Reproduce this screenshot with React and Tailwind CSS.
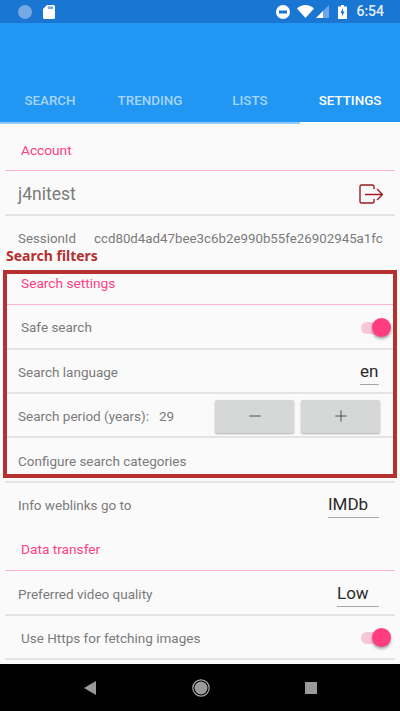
import { Minus, Plus } from "lucide-react";

function Heading({ children, className = "h-[45px]" }) {
  return (
    <div className={`mx-[5px] flex items-center border-b border-[#ffb3cf] pl-4 text-[13.7px] text-[#ff4081] ${className}`}>
      {children}
    </div>
  );
}

function Row({ children, className = "h-[44px] pt-[2px]" }) {
  return (
    <div className={`mx-[5px] flex items-center justify-between border-b-2 border-[#e4e4e4] text-[13.5px] text-[#7b7b7b] ${className}`}>
      {children}
    </div>
  );
}

function Toggle() {
  return (
    <div className="relative mr-[7px] h-[12px] w-[27px] rounded-full bg-[#f8c6d9]">
      <div className="absolute top-[-4px] right-[-3px] h-[19px] w-[19px] rounded-full bg-[#ff3d7f] shadow-[0_2px_3px_rgba(0,0,0,0.35)]" />
    </div>
  );
}

function Picker({ value, width }) {
  return (
    <div className={`mr-[16px] border-b border-[#a8a8a8] pb-[1px] text-[17px] leading-[24px] text-[#2a2a2a] ${width}`}>
      {value}
    </div>
  );
}

function StepButton({ children }) {
  return (
    <div className="flex h-[33px] w-[79px] items-center justify-center rounded-[2px] bg-[#d6d7d7] text-[#444] shadow-[0_1px_2px_rgba(0,0,0,0.3)]">
      {children}
    </div>
  );
}

function StatusBar() {
  return (
    <div className="flex h-[23px] items-center justify-between bg-[#1976d2] pr-[16px] pl-[18px] text-white">
      <div className="flex items-center gap-[11px]">
        <div className="h-[14px] w-[14px] rounded-full bg-[#76a8e4]" />
        <svg width="12" height="14" viewBox="0 0 12 14">
          <path d="M4 0h6.5A1.5 1.5 0 0 1 12 1.5v11a1.5 1.5 0 0 1-1.5 1.5h-9A1.5 1.5 0 0 1 0 12.500V4z" fill="#fff" />
          <rect x="5" y="1.500" width="5" height="2.500" fill="#76a8e4" />
        </svg>
      </div>
      <div className="flex items-center">
        <svg width="14" height="14" viewBox="0 0 14 14">
          <circle cx="7" cy="7" r="7" fill="#fff" />
          <rect x="3" y="5.500" width="8" height="3" fill="#1976d2" />
        </svg>
        <svg className="ml-[7px]" width="17" height="13" viewBox="0 0 17 13">
          <path d="M0 3.500C2.300 1.300 5.200 0 8.500 0S14.700 1.300 17 3.500L8.500 13z" fill="#fff" />
        </svg>
        <svg className="ml-[2px]" width="13" height="13" viewBox="0 0 13 13">
          <path d="M13 0v13H0z" fill="#6ea6e6" />
          <path d="M7 6v7H0z" fill="#fff" />
        </svg>
        <svg className="ml-[9px]" width="9" height="14" viewBox="0 0 9 14">
          <path d="M3 0h3v1.500h3V14H0V1.500h3z" fill="#fff" />
          <path d="M5 3 2.500 8H4v3.500L6.500 6.500H5z" fill="#1976d2" />
        </svg>
        <span className="ml-[9px] text-[14px] font-medium text-[#e6f0fb]">6:54</span>
      </div>
    </div>
  );
}

function Tabs() {
  const tabs = ["SEARCH", "TRENDING", "LISTS", "SETTINGS"];
  return (
    <div className="flex h-[101px] items-end bg-[#2196f3]">
      {tabs.map((tab) => (
        <div
          key={tab}
          className={`flex h-[47px] flex-1 items-center justify-center border-b-2 pt-[3px] text-[13.4px] font-medium ${
            tab === "SETTINGS" ? "border-white text-white" : "border-[#90cbf9] text-[#a6d5fa]"
          }`}
        >
          {tab}
        </div>
      ))}
    </div>
  );
}

function NavBar() {
  return (
    <div className="flex h-[47px] items-center justify-center bg-black">
      <svg className="mr-[96px]" width="12" height="14" viewBox="0 0 12 14">
        <path d="M12 0v14L0 7z" fill="#9a9a9a" />
      </svg>
      <svg className="mr-[95px]" width="18" height="18" viewBox="0 0 18 18">
        <circle cx="9" cy="9" r="8.200" fill="none" stroke="#a8a8a8" strokeWidth="1.200" />
        <circle cx="9" cy="9" r="6.500" fill="#9a9a9a" />
      </svg>
      <div className="h-[12px] w-[12px] bg-[#9a9a9a]" />
    </div>
  );
}

export default function App() {
  return (
    <div className="relative flex h-[711px] w-[400px] flex-col overflow-hidden bg-[#fafafa] font-['Roboto',sans-serif]">
      <StatusBar />
      <Tabs />

      <div className="flex-1">
        <Heading className="h-[47px] pt-[7px]">Account</Heading>
        <Row className="h-[45px] pt-[4px]">
          <span className="pl-[13px] text-[17.5px]">j4nitest</span>
          <svg className="mr-[12px]" width="24" height="21" viewBox="0 0 24 21" fill="none" stroke="#9c1c22" strokeWidth="1.400">
            <path d="M15 5V2.500A1.500 1.500 0 0 0 13.500 1H2.500A1.500 1.500 0 0 0 1 2.500v15A1.500 1.500 0 0 0 2.500 19h11a1.500 1.500 0 0 0 1.500-1.500V15" />
            <path d="M6 10.500h17M18 5l5.500 5.500L18 16" />
          </svg>
        </Row>
        <div className="mx-[5px] flex h-[44px] items-center pt-[1px] pl-[13px] text-[13.3px] text-[#7b7b7b]">
          <span className="w-[76px] shrink-0">SessionId</span>
          <span className="whitespace-nowrap">ccd80d4ad47bee3c6b2e990b55fe26902945a1fc</span>
        </div>

        <Heading className="h-[45px] pt-[3px]">Search settings</Heading>
        <Row className="h-[45px] pt-[2px]">
          <span className="pl-4">Safe search</span>
          <Toggle />
        </Row>
        <Row>
          <span className="pl-[13px]">Search language</span>
          <Picker value="en" width="w-[19px]" />
        </Row>
        <Row>
          <span className="pl-[13px]">Search period (years):</span>
          <span className="mr-auto pl-[10px]">29</span>
          <div className="flex gap-[7px] pr-[15px]">
            <StepButton><Minus size={18} strokeWidth={1.200} /></StepButton>
            <StepButton><Plus size={18} strokeWidth={1.200} /></StepButton>
          </div>
        </Row>
        <Row className="h-[45px] pt-[3px]">
          <span className="pl-[13px]">Configure search categories</span>
        </Row>

        <div className="mx-[5px] flex h-[44px] items-center justify-between text-[13.5px] text-[#7b7b7b]">
          <span className="pl-[13px]">Info weblinks go to</span>
          <Picker value="IMDb" width="w-[51px]" />
        </div>

        <Heading className="h-[44px] pt-[1px]">Data transfer</Heading>
        <Row className="h-[45px] pt-[3px]">
          <span className="pl-[13px]">Preferred video quality</span>
          <Picker value="Low" width="w-[42px]" />
        </Row>
        <Row>
          <span className="pl-4">Use Https for fetching images</span>
          <Toggle />
        </Row>
      </div>

      <NavBar />

      {/* annotation drawn over the screenshot */}
      <div className="absolute top-[245px] left-[6px] font-['Noto_Sans',sans-serif] text-[14px] font-bold text-[#b5302f]">
        Search filters
      </div>
      <div className="pointer-events-none absolute top-[270px] left-[3px] h-[208px] w-[394px] border-[4px] border-[#b5302f]" />
    </div>
  );
}
